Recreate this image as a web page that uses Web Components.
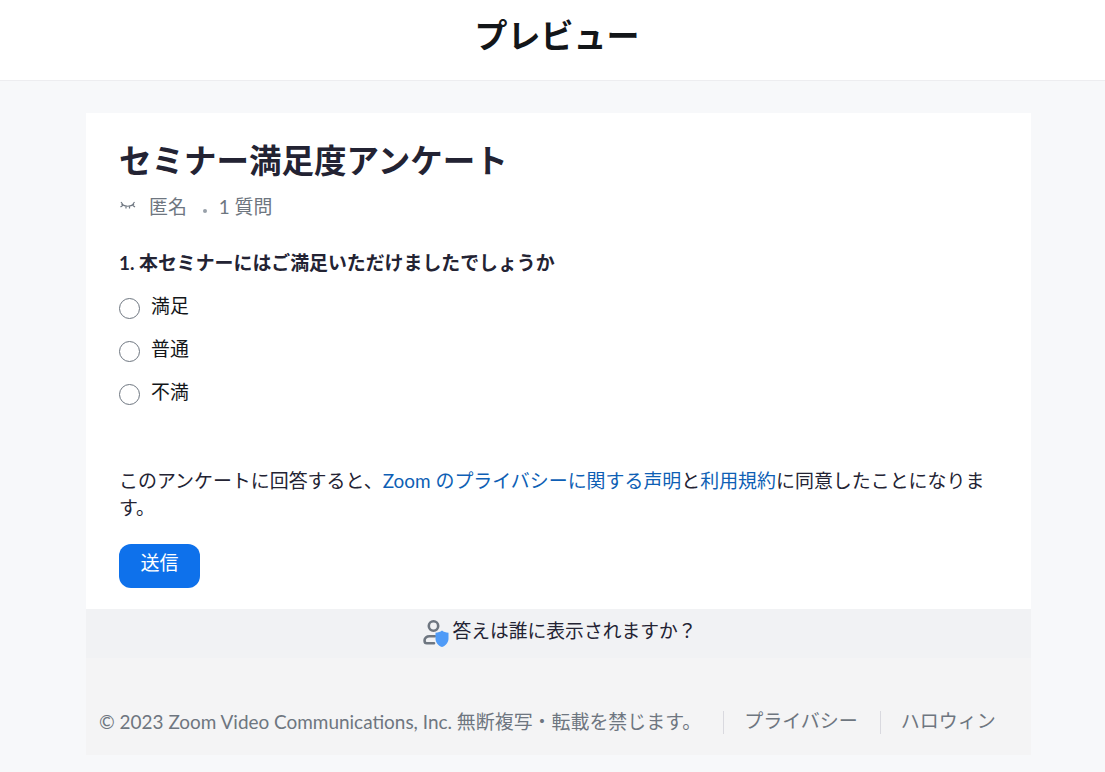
<!DOCTYPE html>
<html lang="ja">

<head>
    <meta charset="UTF-8" />
    <title>プレビュー</title>
    <style>
        html,
        body {
            margin: 0;
            background-color: #f7f8fa;
            font-family: Lato, "Noto Sans CJK JP", sans-serif;
            color: #131619;
        }
    </style>
</head>

<body>
    <preview-page>
        <survey-card>
            <span slot="title">セミナー満足度アンケート</span>
            <survey-question label="1. 本セミナーにはご満足いただけましたでしょうか">
                <survey-option>満足</survey-option>
                <survey-option>普通</survey-option>
                <survey-option>不満</survey-option>
            </survey-question>
        </survey-card>
        <visibility-bar>答えは誰に表示されますか？</visibility-bar>
        <page-footer></page-footer>
    </preview-page>

    <script>
        class PreviewPage extends HTMLElement {
            constructor() {
                super();
                const shadow = this.attachShadow({ mode: 'open' });
                shadow.innerHTML = `
                <style>
                    :host { display: block; }
                    header {
                        height: 68px;
                        padding: 0 0 12px 9px;
                        background: #fff;
                        border-bottom: 1px solid #ededf0;
                        display: flex;
                        justify-content: center;
                        align-items: center;
                        font-size: 33px;
                        font-weight: 700;
                        color: #131619;
                    }
                    main {
                        width: 945px;
                        margin: 32px 0 0 86px;
                    }
                </style>
                <header>プレビュー</header>
                <main><slot></slot></main>
            `;
            }
        }

        class SurveyCard extends HTMLElement {
            constructor() {
                super();
                const shadow = this.attachShadow({ mode: 'open' });
                shadow.innerHTML = `
                <style>
                    :host {
                        display: block;
                        box-sizing: border-box;
                        height: 496px;
                        padding: 25px 33px 0;
                        background: #fff;
                    }
                    h1 {
                        margin: 0;
                        font-size: 32.5px;
                        line-height: 46px;
                        font-weight: 700;
                        color: #232333;
                    }
                    .meta {
                        display: flex;
                        align-items: center;
                        height: 28px;
                        margin-top: 7px;
                        font-size: 18.9px;
                        color: #6e7680;
                    }
                    .meta svg { margin-right: 12px; }
                    .dot {
                        width: 4px;
                        height: 4px;
                        border-radius: 50%;
                        background: #98a0a9;
                        margin: 12px 12px 0 16px;
                    }
                    .terms {
                        margin: 60px 0 0;
                        font-size: 18.95px;
                        line-height: 27px;
                        color: #232333;
                    }
                    a { color: #0e5fb5; text-decoration: none; }
                    button {
                        display: block;
                        width: 81px;
                        height: 44px;
                        margin-top: 23px;
                        padding: 0 0 9px;
                        border: 0;
                        border-radius: 12px;
                        background: #0e71eb;
                        color: #fff;
                        font: inherit;
                        font-size: 19px;
                    }
                </style>
                <h1><slot name="title"></slot></h1>
                <div class="meta">
                    <svg width="18" height="12" viewBox="0 0 18 12" fill="none" stroke="#6e7680" stroke-width="1.2">
                        <path d="M2.500 5C6 8 11.500 8 15 5" />
                        <path d="M2 3l1.500 2M15.500 3L14 5M1.500 8L4 6.200M16 8L13.500 6.200M7 9.500V7.200M10.500 9.500V7.200" />
                    </svg>
                    <span>匿名</span><span class="dot"></span><span>1 質問</span>
                </div>
                <slot></slot>
                <p class="terms"><span>このアンケートに回答すると、</span><a href="#">Zoom のプライバシーに関する声明</a><span>と</span><a href="#">利用規約</a><span>に同意したことになりま</span><span>す。</span></p>
                <button type="button">送信</button>
            `;
            }
        }

        class SurveyQuestion extends HTMLElement {
            constructor() {
                super();
                const shadow = this.attachShadow({ mode: 'open' });
                shadow.innerHTML = `
                <style>
                    :host { display: block; margin-top: 30px; }
                    .label {
                        font-size: 18.9px;
                        line-height: 28px;
                        font-weight: 700;
                        color: #232333;
                    }
                    .options {
                        display: flex;
                        flex-direction: column;
                        gap: 15px;
                        margin-top: 16px;
                    }
                </style>
                <div class="label"></div>
                <div class="options"><slot></slot></div>
            `;
                shadow.querySelector('.label').textContent = this.getAttribute('label');
            }
        }

        class SurveyOption extends HTMLElement {
            constructor() {
                super();
                const shadow = this.attachShadow({ mode: 'open' });
                shadow.innerHTML = `
                <style>
                    :host {
                        display: flex;
                        align-items: flex-start;
                        height: 28px;
                        font-size: 18.9px;
                        line-height: 26px;
                        color: #131619;
                    }
                    .radio {
                        box-sizing: border-box;
                        width: 21px;
                        height: 21px;
                        margin: 5px 11px 0 0;
                        border: 1px solid #6e7680;
                        border-radius: 50%;
                        background: #fff;
                    }
                </style>
                <span class="radio"></span>
                <slot></slot>
            `;
            }
        }

        class VisibilityBar extends HTMLElement {
            constructor() {
                super();
                const shadow = this.attachShadow({ mode: 'open' });
                shadow.innerHTML = `
                <style>
                    :host {
                        display: flex;
                        justify-content: center;
                        align-items: flex-start;
                        height: 49px;
                        background: #f1f2f4;
                        font-size: 18.8px;
                        line-height: 44px;
                        color: #232333;
                    }
                    svg { margin: 11px 3px 0 2px; }
                </style>
                <svg width="27" height="28" viewBox="0 0 27 28" fill="none">
                    <circle cx="11.500" cy="6" r="4.700" stroke="#6e7680" stroke-width="2.600" />
                    <path d="M13 16.300H7.500C4.500 16.300 2.600 18 2.600 20v1c0 1.200 .9 2.200 2.200 2.200H12" stroke="#6e7680" stroke-width="2.600" stroke-linecap="round" />
                    <path d="M20 10.500c1.600 1.300 3.800 2.100 6.500 2.300v5.700c0 4-2.700 7.100-6.500 8.500-3.800-1.400-6.500-4.500-6.500-8.500v-5.700c2.700-.2 4.900-1 6.500-2.300z" fill="#4f9bf7" />
                </svg>
                <slot></slot>
            `;
            }
        }

        class PageFooter extends HTMLElement {
            constructor() {
                super();
                const shadow = this.attachShadow({ mode: 'open' });
                shadow.innerHTML = `
                <style>
                    :host {
                        display: flex;
                        box-sizing: border-box;
                        align-items: center;
                        height: 97px;
                        padding: 28px 0 0 13px;
                        background: #f4f4f5;
                        font-size: 18.95px;
                        color: #6e7680;
                        white-space: nowrap;
                    }
                    .link {
                        margin: 4px 0 0 22px;
                        padding: 0 0 4px 20px;
                        border-left: 1px solid #d9d9df;
                        font-size: 19px;
                        line-height: 19px;
                    }
                </style>
                <span class="copy">© 2023 Zoom Video Communications, Inc. 無断複写・転載を禁じます。</span>
                <span class="link">プライバシー</span>
                <span class="link">ハロウィン</span>
            `;
            }
        }

        customElements.define('preview-page', PreviewPage);
        customElements.define('survey-card', SurveyCard);
        customElements.define('survey-question', SurveyQuestion);
        customElements.define('survey-option', SurveyOption);
        customElements.define('visibility-bar', VisibilityBar);
        customElements.define('page-footer', PageFooter);
    </script>

</body>

</html>
